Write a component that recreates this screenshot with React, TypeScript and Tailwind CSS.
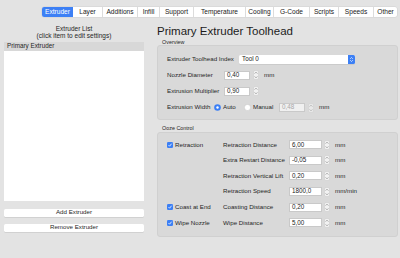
import React from "react";

const tabs: [string, number][] = [
  ["Extruder", 31],
  ["Layer", 29],
  ["Additions", 35],
  ["Infill", 22],
  ["Support", 34],
  ["Temperature", 52],
  ["Cooling", 28],
  ["G-Code", 36],
  ["Scripts", 29],
  ["Speeds", 35],
  ["Other", 24],
];

function Stepper() {
  return (
    <svg width="6" height="10" viewBox="0 0 6 10" className="shrink-0">
      <rect x="0.5" y="0.5" width="5" height="9" rx="1.5" fill="#f2f2f2" stroke="#c8c8c8" strokeWidth="0.5" />
      <path d="M1.6 3.6 L3 2.2 L4.4 3.6" fill="none" stroke="#777" strokeWidth="0.6" />
      <path d="M1.6 6.4 L3 7.8 L4.4 6.4" fill="none" stroke="#777" strokeWidth="0.6" />
    </svg>
  );
}

function Input({ value, w, disabled }: { value: string; w: number; disabled?: boolean }) {
  return (
    <div
      className={`h-[9px] flex items-center pl-[2px] border-[0.5px] border-[#c9c9c9] text-[6.3px] leading-none ${
        disabled ? "bg-[#f0f0f0] text-[#a8a8a8]" : "bg-white text-[#222]"
      }`}
      style={{ width: w }}
    >
      {value}
    </div>
  );
}

function Check({ label }: { label: string }) {
  return (
    <div className="flex items-center gap-[2px]">
      <svg width="6" height="6" viewBox="0 0 6 6" className="shrink-0">
        <rect x="0" y="0" width="6" height="6" rx="1.3" fill="#3b7ff5" />
        <path d="M1.5 3.1 L2.6 4.2 L4.6 1.7" fill="none" stroke="#fff" strokeWidth="0.8" />
      </svg>
      <span>{label}</span>
    </div>
  );
}

function Radio({ on }: { on: boolean }) {
  return on ? (
    <svg width="7" height="7" viewBox="0 0 7 7" className="shrink-0">
      <circle cx="3.5" cy="3.5" r="3.3" fill="#3b7ff5" />
      <circle cx="3.5" cy="3.5" r="1.2" fill="#fff" />
    </svg>
  ) : (
    <svg width="7" height="7" viewBox="0 0 7 7" className="shrink-0">
      <circle cx="3.5" cy="3.5" r="3.1" fill="#fff" stroke="#c4c4c4" strokeWidth="0.5" />
    </svg>
  );
}

function OozeRow({ left, label, value, unit }: { left?: string; label: string; value: string; unit: string }) {
  return (
    <div className="h-[15.6px] flex items-center">
      <div className="w-[65px] pl-[9px]">{left ? <Check label={left} /> : null}</div>
      <div className="w-[66px]">{label}</div>
      <Input value={value} w={33} />
      <div className="ml-[2px]">
        <Stepper />
      </div>
      <span className="ml-[5px]">{unit}</span>
    </div>
  );
}

export default function App() {
  return (
    <div className="w-[400px] h-[258px] bg-[#e3e3e3] overflow-hidden font-['Liberation_Sans',Arial,sans-serif] text-[#262626] text-[6.2px] leading-none">
      {/* tabs */}
      <div className="pt-[7px] pl-[42px] flex">
        <div className="flex h-[10px] rounded-[2px] overflow-hidden bg-white shadow-[0_0_0_0.5px_#d2d2d2]">
          {tabs.map(([t, w], i) => (
            <div
              key={t}
              className={`flex items-center justify-center text-[6.6px] ${
                i === 0 ? "bg-[#3d80f5] text-white" : "text-[#222]"
              } ${i > 1 ? "border-l-[0.5px] border-[#dcdcdc]" : ""}`}
              style={{ width: w }}
            >
              {t}
            </div>
          ))}
        </div>
      </div>

      <div className="flex">
        {/* left */}
        <div className="ml-[4px] w-[140px] flex flex-col">
          <div className="mt-[7.5px] text-center text-[6.5px] leading-[7px]">
            <div>Extruder List</div>
            <div>(click item to edit settings)</div>
          </div>
          <div className="mt-[3px] h-[159px] bg-white flex flex-col">
            <div className="h-[9px] bg-[#d8d8d8] flex items-center pl-[3px] text-[6.3px]">Primary Extruder</div>
          </div>
          <div className="mt-[8px] h-[8px] bg-white rounded-[1.5px] shadow-[0_0.5px_0.5px_#c0c0c0] flex items-center justify-center text-[6.2px]">
            Add Extruder
          </div>
          <div className="mt-[7px] h-[8px] bg-white rounded-[1.5px] shadow-[0_0.5px_0.5px_#c0c0c0] flex items-center justify-center text-[6.2px]">
            Remove Extruder
          </div>
        </div>

        {/* right */}
        <div className="ml-[13px] w-[241px] flex flex-col">
          <div className="mt-[8px] text-[11.5px] leading-[13px] text-[#1c1c1c]">Primary Extruder Toolhead</div>
          <div className="mt-[1px] pl-[5px] text-[5.4px] leading-[6px]">Overview</div>
          <div className="mt-[0px] h-[75px] bg-[#d9d9d9] rounded-[3px] border-[0.5px] border-[#d0d0d0] flex flex-col pt-[5px]">
            <div className="h-[16px] flex items-center">
              <div className="w-[81px] pl-[9px]">Extruder Toolhead Index</div>
              <div className="w-[116px] h-[9px] bg-white rounded-[1.5px] flex items-center shadow-[0_0.5px_0.5px_#bdbdbd]">
                <span className="pl-[3px] flex-1 text-[6.3px]">Tool 0</span>
                <div className="w-[7px] h-[9px] bg-[#3d80f5] rounded-r-[1.5px] flex items-center justify-center">
                  <svg width="5" height="7" viewBox="0 0 5 7">
                    <path d="M1.2 2.8 L2.5 1.5 L3.8 2.8" fill="none" stroke="#fff" strokeWidth="0.7" />
                    <path d="M1.2 4.2 L2.5 5.5 L3.8 4.2" fill="none" stroke="#fff" strokeWidth="0.7" />
                  </svg>
                </div>
              </div>
            </div>
            <div className="h-[16px] flex items-center">
              <div className="w-[66px] pl-[9px]">Nozzle Diameter</div>
              <Input value="0,40" w={26} />
              <div className="ml-[3px]">
                <Stepper />
              </div>
              <span className="ml-[5px]">mm</span>
            </div>
            <div className="h-[16px] flex items-center">
              <div className="w-[66px] pl-[9px]">Extrusion Multiplier</div>
              <Input value="0,90" w={26} />
              <div className="ml-[3px]">
                <Stepper />
              </div>
            </div>
            <div className="h-[17px] flex items-center">
              <div className="w-[56px] pl-[9px]">Extrusion Width</div>
              <Radio on />
              <span className="ml-[2px] w-[21px]">Auto</span>
              <Radio on={false} />
              <span className="ml-[2px] w-[26px]">Manual</span>
              <Input value="0,48" w={26} disabled />
              <div className="ml-[3px] opacity-60">
                <Stepper />
              </div>
              <span className="ml-[5px]">mm</span>
            </div>
          </div>

          <div className="mt-[5px] pl-[5px] text-[5.4px] leading-[6px]">Ooze Control</div>
          <div className="mt-[1px] h-[105px] bg-[#d9d9d9] rounded-[3px] border-[0.5px] border-[#d0d0d0] flex flex-col pt-[4px]">
            <OozeRow left="Retraction" label="Retraction Distance" value="6,00" unit="mm" />
            <OozeRow label="Extra Restart Distance" value="-0,05" unit="mm" />
            <OozeRow label="Retraction Vertical Lift" value="0,20" unit="mm" />
            <OozeRow label="Retraction Speed" value="1800,0" unit="mm/min" />
            <OozeRow left="Coast at End" label="Coasting Distance" value="0,20" unit="mm" />
            <OozeRow left="Wipe Nozzle" label="Wipe Distance" value="5,00" unit="mm" />
          </div>
        </div>
      </div>
    </div>
  );
}
